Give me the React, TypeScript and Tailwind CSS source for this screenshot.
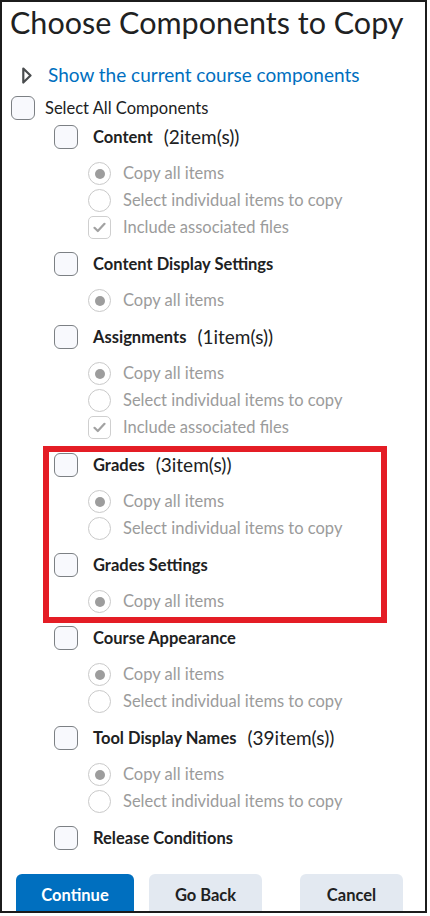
import React from 'react';

type Option = { label: string; kind: 'radio-on' | 'radio-off' | 'check-on' };

type Component = {
  name: string;
  count?: string;
  options: Option[];
};

const copyAll: Option = { label: 'Copy all items', kind: 'radio-on' };
const selectItems: Option = { label: 'Select individual items to copy', kind: 'radio-off' };
const includeFiles: Option = { label: 'Include associated files', kind: 'check-on' };

const before: Component[] = [
  { name: 'Content', count: '(2item(s))', options: [copyAll, selectItems, includeFiles] },
  { name: 'Content Display Settings', options: [copyAll] },
  { name: 'Assignments', count: '(1item(s))', options: [copyAll, selectItems, includeFiles] },
];

const highlighted: Component[] = [
  { name: 'Grades', count: '(3item(s))', options: [copyAll, selectItems] },
  { name: 'Grades Settings', options: [copyAll] },
];

const after: Component[] = [
  { name: 'Course Appearance', options: [copyAll, selectItems] },
  { name: 'Tool Display Names', count: '(39item(s))', options: [copyAll, selectItems] },
  { name: 'Release Conditions', options: [] },
];

const Checkbox = () => (
  <span className="block w-[24px] h-[24px] shrink-0 rounded-[6px] border border-[#7c8084] bg-[#f8f9fd]" />
);

const OptionIcon = ({ kind }: { kind: Option['kind'] }) => {
  if (kind === 'check-on') {
    return (
      <span className="flex items-center justify-center w-[23px] h-[23px] shrink-0 rounded-[5px] border border-[#cfcfcf] bg-white">
        <svg width="13" height="11" viewBox="0 0 13 11" fill="none">
          <path d="M1.5 5.8 L4.8 9 L11.5 1.8" stroke="#a2a2a2" strokeWidth="2.2" strokeLinecap="round" strokeLinejoin="round" />
        </svg>
      </span>
    );
  }
  return (
    <span className="flex items-center justify-center w-[23px] h-[23px] shrink-0 rounded-full border border-[#c9c9c9] bg-white">
      {kind === 'radio-on' && <span className="block w-[10px] h-[10px] rounded-full bg-[#9d9d9d]" />}
    </span>
  );
};

const ComponentBlock = ({ item, last }: { item: Component; last?: boolean }) => (
  <div className={last ? 'pb-[2px]' : 'pb-[11px]'}>
    <div className="flex items-center h-[24px]">
      <Checkbox />
      <span className="ml-[15px] text-[16.5px] font-bold text-[#202122]">{item.name}</span>
      {item.count && <span className="ml-[11px] text-[19px] text-[#202122]">{item.count}</span>}
    </div>
    {item.options.length > 0 && (
      <div className="mt-[11px] ml-[34px]">
        {item.options.map((opt) => (
          <div key={opt.label} className="flex items-center h-[27px]">
            <OptionIcon kind={opt.kind} />
            <span className="ml-[12px] text-[16.5px] text-[#9b9b9b]">{opt.label}</span>
          </div>
        ))}
      </div>
    )}
  </div>
);

export default function App() {
  return (
    <div className="w-[427px] h-[913px] border-2 border-[#1c1c1c] overflow-hidden bg-white font-['Lato',sans-serif]">
      <h1 className="pt-[2px] pl-[8px] text-[30.5px] leading-[36px] font-normal text-[#202122]">
        Choose Components to Copy
      </h1>

      <div className="mt-[23px] flex items-center h-[24px]">
        <svg className="ml-[20px] shrink-0" width="10" height="17" viewBox="0 0 10 17" fill="none">
          <path d="M1.3 1.5 L8.5 8.5 L1.3 15.5 Z" stroke="#494c4e" strokeWidth="2.2" strokeLinejoin="round" />
        </svg>
        <span className="ml-[16px] text-[19px] text-[#006fbf]">Show the current course components</span>
      </div>

      <div className="mt-[9px] ml-[9px] flex items-center h-[24px]">
        <Checkbox />
        <span className="ml-[10px] text-[16.5px] text-[#202122]">Select All Components</span>
      </div>

      <div className="mt-[5px] pl-[52px]">
        {before.map((c) => (
          <ComponentBlock key={c.name} item={c} />
        ))}
        <div className="-mt-[6px] mb-[3px] -ml-[11px] w-[344px] border-[6px] border-[#e41d25] pl-[5px] pt-[1px]">
          {highlighted.map((c, i) => (
            <ComponentBlock key={c.name} item={c} last={i === highlighted.length - 1} />
          ))}
        </div>
        {after.map((c) => (
          <ComponentBlock key={c.name} item={c} last={c.options.length === 0} />
        ))}
      </div>

      <div className="mt-[22px] ml-[14px] flex">
        <button className="w-[118px] h-[42px] rounded-[6px] bg-[#006fbf] text-white text-[16.5px] font-bold">
          Continue
        </button>
        <button className="ml-[15px] w-[113px] h-[42px] rounded-[6px] bg-[#e3e9f1] text-[#202122] text-[16.5px] font-bold">
          Go Back
        </button>
        <button className="ml-[38px] w-[103px] h-[42px] rounded-[6px] bg-[#e3e9f1] text-[#202122] text-[16.5px] font-bold">
          Cancel
        </button>
      </div>
    </div>
  );
}
